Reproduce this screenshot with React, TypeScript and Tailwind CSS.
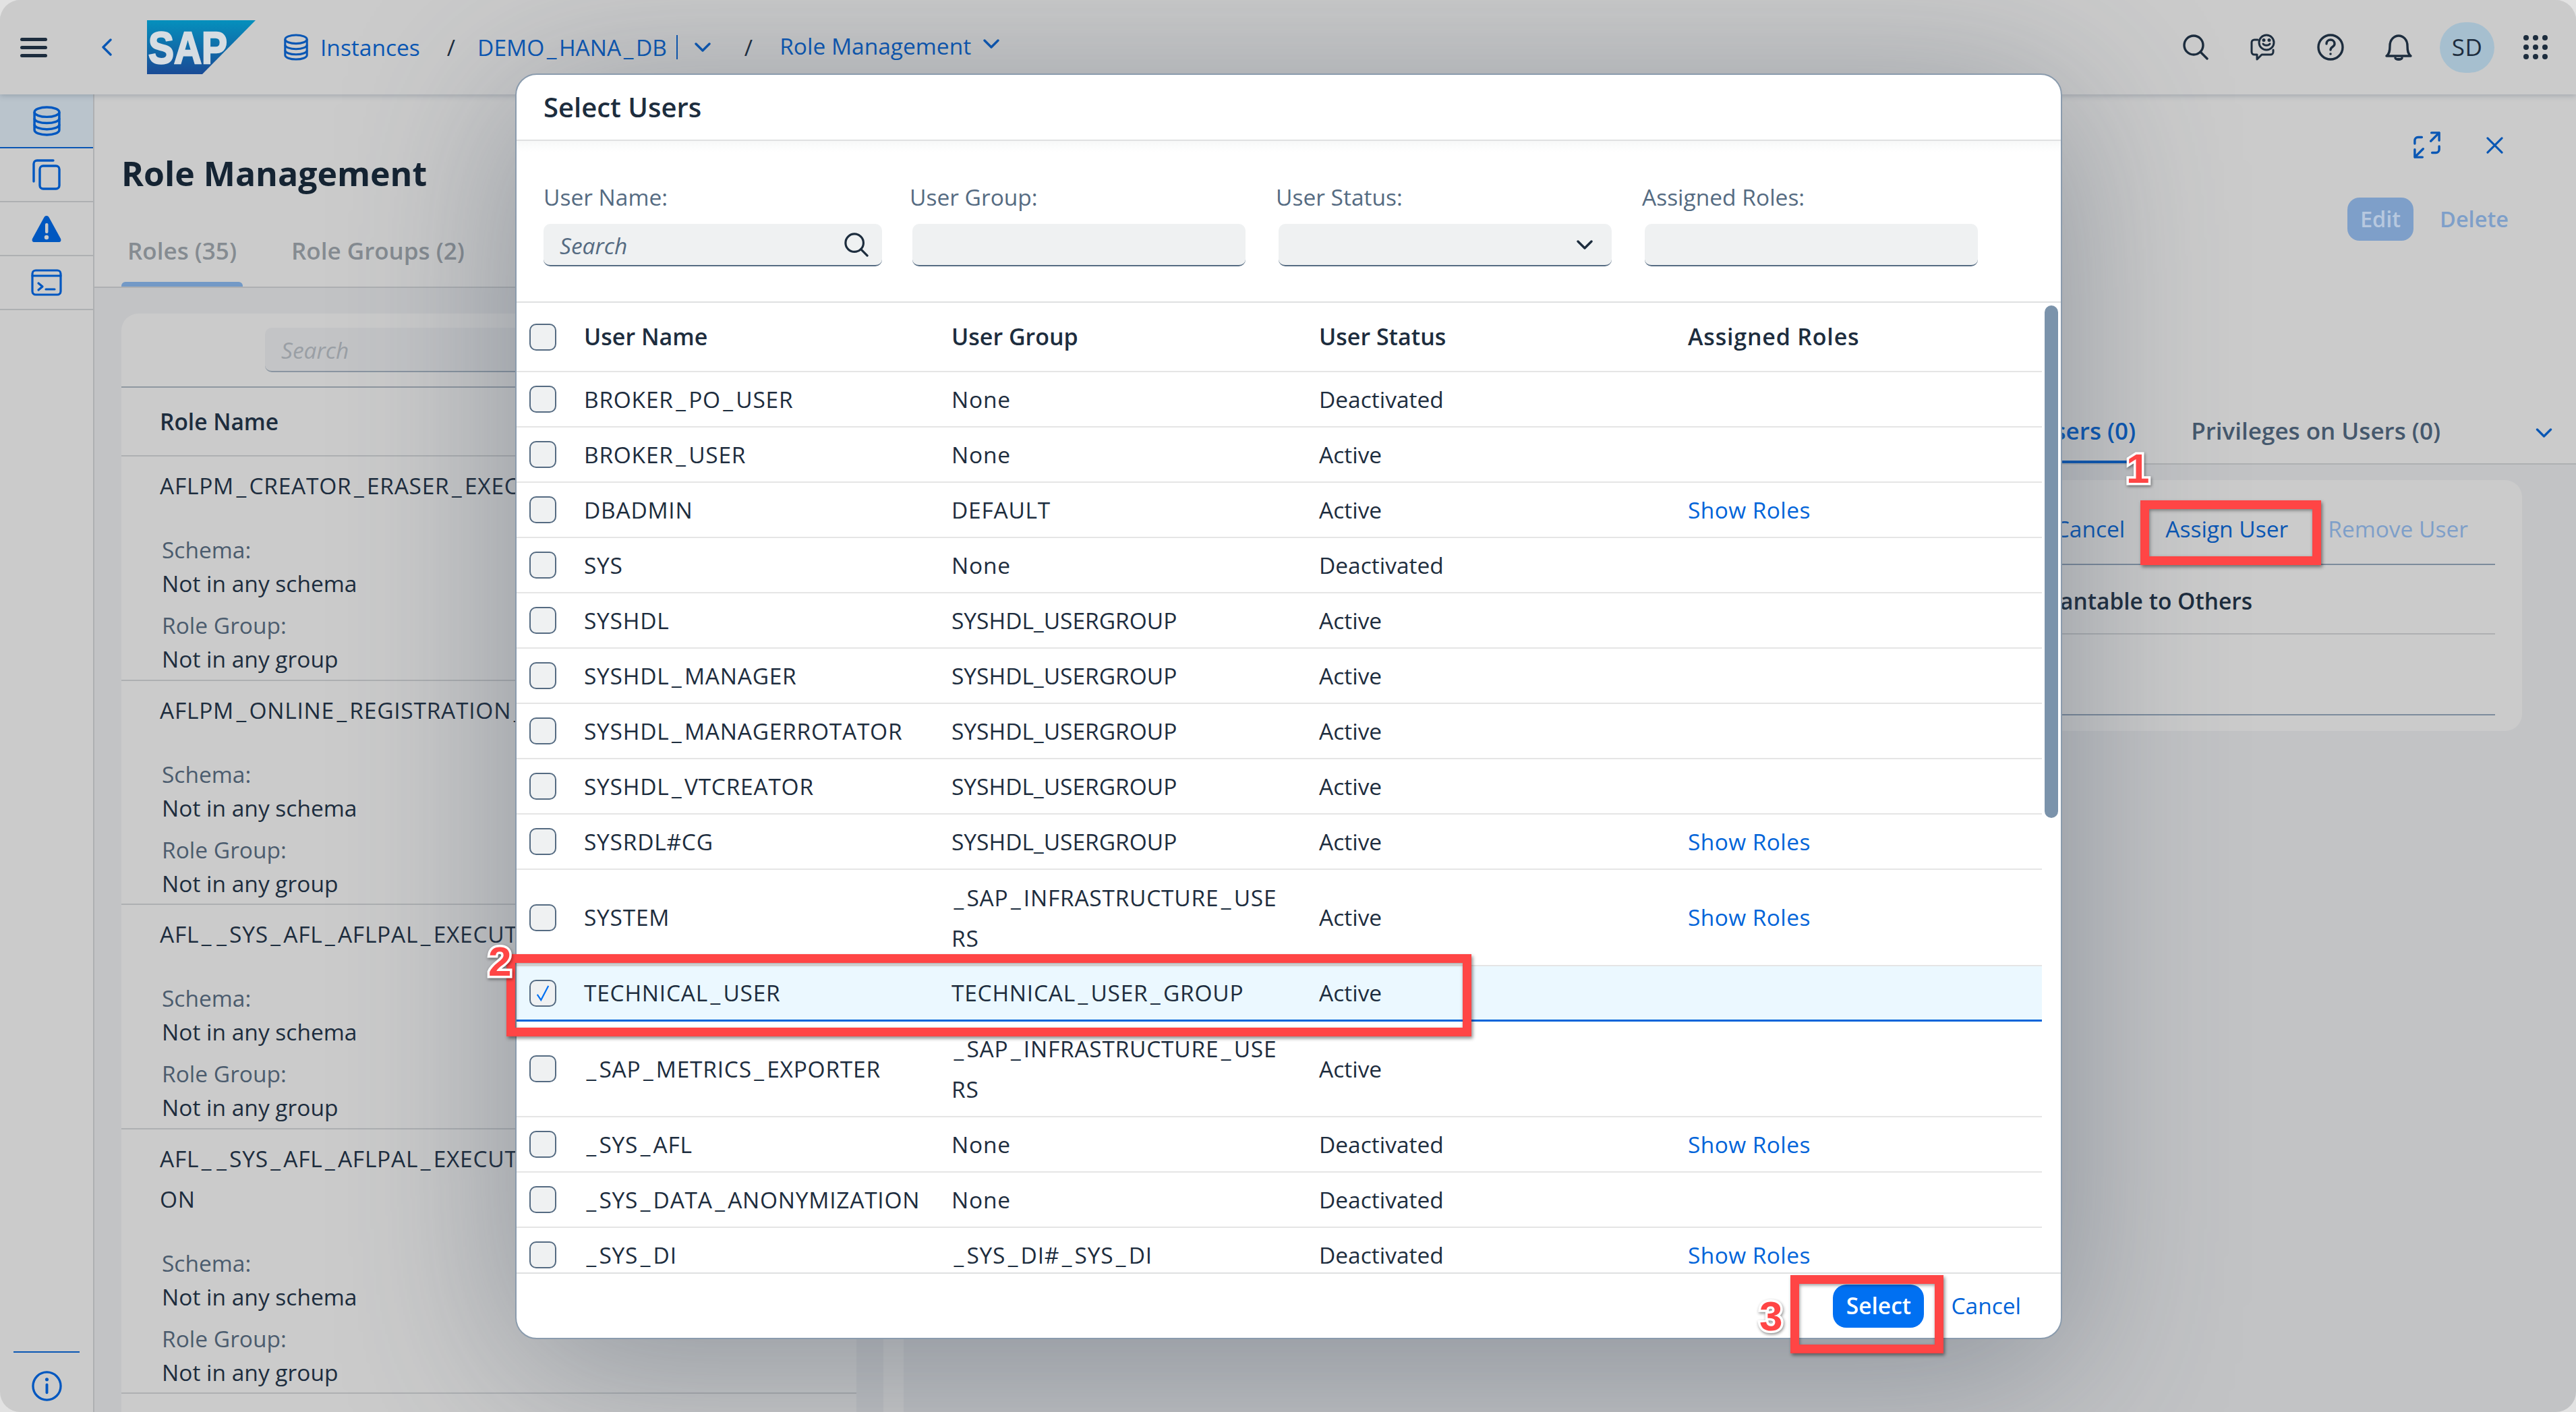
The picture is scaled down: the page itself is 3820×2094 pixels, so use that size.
import React from "react";

const blue = "#0a57b4";

const users = [
  { name: "BROKER_PO_USER", group: "None", status: "Deactivated", roles: false },
  { name: "BROKER_USER", group: "None", status: "Active", roles: false },
  { name: "DBADMIN", group: "DEFAULT", status: "Active", roles: true },
  { name: "SYS", group: "None", status: "Deactivated", roles: false },
  { name: "SYSHDL", group: "SYSHDL_USERGROUP", status: "Active", roles: false },
  { name: "SYSHDL_MANAGER", group: "SYSHDL_USERGROUP", status: "Active", roles: false },
  { name: "SYSHDL_MANAGERROTATOR", group: "SYSHDL_USERGROUP", status: "Active", roles: false },
  { name: "SYSHDL_VTCREATOR", group: "SYSHDL_USERGROUP", status: "Active", roles: false },
  { name: "SYSRDL#CG", group: "SYSHDL_USERGROUP", status: "Active", roles: true },
  { name: "SYSTEM", group: "_SAP_INFRASTRUCTURE_USE|RS", status: "Active", roles: true, tall: "h-[143px]" },
  { name: "TECHNICAL_USER", group: "TECHNICAL_USER_GROUP", status: "Active", roles: false, selected: true },
  { name: "_SAP_METRICS_EXPORTER", group: "_SAP_INFRASTRUCTURE_USE|RS", status: "Active", roles: false, tall: "h-[142px]" },
  { name: "_SYS_AFL", group: "None", status: "Deactivated", roles: true },
  { name: "_SYS_DATA_ANONYMIZATION", group: "None", status: "Deactivated", roles: false },
  { name: "_SYS_DI", group: "_SYS_DI#_SYS_DI", status: "Deactivated", roles: true },
];

// only the part of each title that shows beside the dialog
const roles = [
  { title: ["AFLPM_CREATOR_ERASER_EXECUTE"] },
  { title: ["AFLPM_ONLINE_REGISTRATION_EXE"] },
  { title: ["AFL__SYS_AFL_AFLPAL_EXECUTE"] },
  { title: ["AFL__SYS_AFL_AFLPAL_EXECUTE", "ON"] },
];

// the reference font has a much wider underscore than Open Sans
const Ident = ({ text, tight }: { text: string; tight?: boolean }) => (
  <span className={tight ? "" : "tracking-[0.75px]"}>
    {text.split(/(_)/).map((part, i) =>
      part === "_" ? (
        <span key={i} className="px-[3.5px]">
          _
        </span>
      ) : (
        part
      )
    )}
  </span>
);

const DbIcon = ({ className }: { className: string }) => (
  <svg viewBox="0 0 40 44" className={className} fill="none" stroke="currentColor" strokeWidth="3.4">
    <ellipse cx="20" cy="9" rx="18" ry="7" />
    <path d="M2 9v26c0 4 8 7 18 7s18-3 18-7V9" />
    <path d="M2 18c0 4 8 7 18 7s18-3 18-7" />
    <path d="M2 27c0 4 8 7 18 7s18-3 18-7" />
  </svg>
);

const Chevron = ({ className }: { className: string }) => (
  <svg viewBox="0 0 24 14" className={className} fill="none" stroke="currentColor" strokeWidth="3.4" strokeLinecap="round" strokeLinejoin="round">
    <path d="M2 2l10 10L22 2" />
  </svg>
);

const SearchIcon = ({ className }: { className: string }) => (
  <svg viewBox="0 0 38 38" className={className} fill="none" stroke="currentColor" strokeWidth="3.4" strokeLinecap="round">
    <circle cx="16" cy="16" r="14" />
    <path d="M26 26l10 10" />
  </svg>
);

const SapLogo = () => (
  <svg viewBox="0 0 161 80" className="w-[161px] h-[80px]">
    <defs>
      <linearGradient id="sapfill" x1="0" y1="0" x2="0" y2="1">
        <stop offset="0" stopColor="#0590bd" />
        <stop offset="1" stopColor="#1a4b96" />
      </linearGradient>
    </defs>
    <path d="M0 0H161L82 80H0Z" fill="url(#sapfill)" />
    <text
      x="2"
      y="64"
      textLength="117"
      lengthAdjust="spacingAndGlyphs"
      fill="#d6dde2"
      stroke="#d6dde2"
      strokeWidth="2.5"
      fontFamily="'Liberation Sans',sans-serif"
      fontWeight="700"
      fontSize="66"
    >
      SAP
    </text>
  </svg>
);

const Checkbox = ({ checked }: { checked?: boolean }) => (
  <div className="w-[40px] h-[40px] rounded-[10px] border-2 border-[#556b82] bg-[#eff1f2] flex items-center justify-center">
    {checked && (
      <svg viewBox="0 0 24 30" className="w-[22px] h-[28px]" fill="none" stroke="#0070f2" strokeWidth="2.4">
        <path d="M3 17l6 9L21 3" />
      </svg>
    )}
  </div>
);

const RedBox = ({ className }: { className: string }) => (
  <div className={`absolute border-[13px] border-[#ff4545] shadow-[2px_3px_5px_rgba(0,0,0,0.45),inset_1px_2px_5px_rgba(0,0,0,0.4)] ${className}`} />
);

const Digit = ({ n, className }: { n: string; className: string }) => (
  <div
    className={`absolute font-['Liberation_Sans',sans-serif] font-bold text-[62px] leading-none text-[#ff4545] [-webkit-text-stroke:7px_white] [paint-order:stroke_fill] drop-shadow-[1px_2px_2px_rgba(0,0,0,0.45)] ${className}`}
  >
    {n}
  </div>
);

const Sidebar = () => (
  <div className="w-[140px] shrink-0 border-r-2 border-[#aeb0b2] bg-[#cbcbcb] flex flex-col text-[#0057c0]">
    <div className="h-[80px] bg-[#bac4cc] border-b-2 border-[#0a57b4] flex items-center justify-center">
      <DbIcon className="w-[41px] h-[45px]" />
    </div>
    <div className="h-[80px] border-b-2 border-[#aeb0b2] flex items-center justify-center">
      <svg viewBox="0 0 42 46" className="w-[42px] h-[46px]" fill="none" stroke="currentColor" strokeWidth="3.4" strokeLinecap="round">
        <rect x="11" y="10" width="29" height="34" rx="5" />
        <path d="M2 33V7c0-3 2-5 5-5h24" />
      </svg>
    </div>
    <div className="h-[80px] border-b-2 border-[#aeb0b2] flex items-center justify-center">
      <svg viewBox="0 0 46 42" className="w-[46px] h-[42px]">
        <path d="M23 2c2 0 3 1 4 3l17 31c1 3 0 5-3 5H5c-3 0-4-2-3-5L19 5c1-2 2-3 4-3z" fill="currentColor" />
        <rect x="21" y="13" width="4.5" height="15" rx="2" fill="#cbcbcb" />
        <circle cx="23" cy="34" r="3.2" fill="#cbcbcb" />
      </svg>
    </div>
    <div className="h-[80px] border-b-2 border-[#aeb0b2] flex items-center justify-center">
      <svg viewBox="0 0 46 40" className="w-[46px] h-[40px]" fill="none" stroke="currentColor" strokeWidth="3.2" strokeLinecap="round" strokeLinejoin="round">
        <rect x="2" y="2" width="42" height="36" rx="5" />
        <path d="M2 10h42" />
        <path d="M11 21l6 5-6 5" />
        <path d="M22 30h13" />
      </svg>
    </div>
    <div className="mt-auto mx-[20px] border-t-2 border-[#0a57b4]" />
    <div className="h-[88px] pt-[10px] flex items-center justify-center">
      <svg viewBox="0 0 46 46" className="w-[45px] h-[45px]" fill="none" stroke="currentColor" strokeWidth="3.4" strokeLinecap="round">
        <circle cx="23" cy="23" r="21" />
        <path d="M23 21v12" strokeWidth="4" />
        <circle cx="23" cy="13" r="2.6" fill="currentColor" stroke="none" />
      </svg>
    </div>
  </div>
);

const Header = () => (
  <div className="relative z-10 h-[140px] shrink-0 bg-[#cbcbcb] shadow-[0_2px_8px_rgba(70,85,105,0.3)] flex items-center pl-[30px] pr-[42px] text-[33.5px]" style={{ color: blue }}>
    <div className="w-[40px] flex flex-col gap-[7px]">
      <div className="h-[5px] rounded bg-[#1d2d3e]" />
      <div className="h-[5px] rounded bg-[#1d2d3e]" />
      <div className="h-[5px] rounded bg-[#1d2d3e]" />
    </div>
    <svg viewBox="0 0 16 26" className="ml-[80px] w-[16px] h-[26px]" fill="none" stroke="currentColor" strokeWidth="3.4" strokeLinecap="round" strokeLinejoin="round">
      <path d="M14 2L3 13l11 11" />
    </svg>
    <div className="ml-[52px]">
      <SapLogo />
    </div>
    <DbIcon className="ml-[42px] w-[36px] h-[40px]" />
    <span className="ml-[18px]">Instances</span>
    <span className="ml-[40px] text-[#1d2d3e]">/</span>
    <span className="ml-[33px]">
      <Ident text="DEMO_HANA_DB" tight />
    </span>
    <div className="ml-[14px] w-[2px] h-[36px] bg-[#0a57b4]" />
    <Chevron className="ml-[25px] w-[24px] h-[14px]" />
    <span className="ml-[50px] text-[#1d2d3e]">/</span>
    <span className="ml-[40px] mb-[4px]">Role Management</span>
    <Chevron className="ml-[18px] mb-[10px] w-[24px] h-[14px]" />

    <div className="ml-auto flex items-center text-[#1d2d3e]">
      <SearchIcon className="w-[38px] h-[38px]" />
      <svg viewBox="0 0 38 40" className="ml-[62px] w-[38px] h-[40px]" fill="none" stroke="currentColor" strokeWidth="3" strokeLinecap="round" strokeLinejoin="round">
        <path d="M11 9H6a4 4 0 0 0-4 4v14a4 4 0 0 0 4 4h4v7l7-7h13a4 4 0 0 0 4-4v-3" />
        <circle cx="24" cy="13" r="11" />
        <path d="M19 15c2 3 8 3 10 0" />
        <circle cx="20" cy="9.5" r="1" fill="currentColor" />
        <circle cx="28" cy="9.5" r="1" fill="currentColor" />
      </svg>
      <svg viewBox="0 0 40 40" className="ml-[61px] w-[40px] h-[40px]" fill="none" stroke="currentColor" strokeWidth="3.4" strokeLinecap="round">
        <circle cx="20" cy="20" r="18" />
        <path d="M14 15c0-8 12-8 12 0 0 5-6 4-6 9" />
        <circle cx="20" cy="30" r="1.8" fill="currentColor" stroke="none" />
      </svg>
      <svg viewBox="0 0 40 40" className="ml-[61px] w-[40px] h-[40px]" fill="none" stroke="currentColor" strokeWidth="3.4" strokeLinecap="round" strokeLinejoin="round">
        <path d="M2 33h36c-4-3-5-7-5-15C33 9 27 3 20 3S7 9 7 18c0 8-1 12-5 15z" />
        <path d="M15 36c1 3 9 3 10 0" fill="currentColor" />
      </svg>
      <div className="ml-[41px] w-[81px] h-[75px] rounded-full bg-[#a6bfcf] flex items-center justify-center font-medium text-[35px] [letter-spacing:0.5px]">
        SD
      </div>
      <div className="ml-[43px] grid grid-cols-3 gap-x-[6px] gap-y-[6px]">
        {Array.from({ length: 9 }).map((_, i) => (
          <div key={i} className="w-[8px] h-[8px] rounded-full bg-[#1d2d3e]" />
        ))}
      </div>
    </div>
  </div>
);

const LeftPane = () => (
  <div className="w-[1170px] shrink-0 bg-[#c2c3c5] flex flex-col overflow-hidden">
    <div className="bg-[#cbcbcb] border-b-2 border-[#aeb0b2] pl-[40px] pt-[87px] h-[287px] shrink-0">
      <div className="text-[50px] leading-[60px] font-bold text-[#152433]">Role Management</div>
      <div className="mt-[55px] h-[83px] flex items-stretch font-semibold text-[35px] text-[#858b91]">
        <div className="w-[180px] flex flex-col items-center">
          <span className="mt-[8px] leading-[44px]">Roles (35)</span>
          <div className="mt-auto w-full h-[7px] rounded-t-md bg-[#7399c6]" />
        </div>
        <span className="ml-[72px] mt-[8px] leading-[44px]">Role Groups (2)</span>
      </div>
    </div>
    <div className="ml-[40px] mt-[38px] w-[1090px] flex-1 rounded-t-[25px] bg-[#cbcbcb] text-[33.5px]">
      <div className="h-[110px] border-b-2 border-[#8f97a0] pl-[213px] pt-[21px]">
        <div className="w-[860px] h-[66px] bg-[#c3c4c6] border-b-2 border-[#8a95a1] rounded-[10px] pl-[24px] pt-[3px] flex items-center italic text-[#9a9fa5]">
          Search
        </div>
      </div>
      <div className="h-[102px] border-b-2 border-[#aeb0b2] pl-[57px] flex items-center font-semibold text-[#1d2d3e]">
        Role Name
      </div>
      {roles.map((r, i) => (
        <div key={i} className="border-b-2 border-[#aeb0b2] pt-[13px] pb-[5.5px] pl-[57px] text-[#1d2d3e] overflow-hidden">
          <div className="leading-[60px] whitespace-nowrap">
            {r.title.map((t) => (
              <div key={t}>
                <Ident text={t} />
              </div>
            ))}
          </div>
          <div className="mt-[40px] ml-[3px] leading-[50px] text-[#4b5c6e]">Schema:</div>
          <div className="ml-[3px] leading-[50px]">Not in any schema</div>
          <div className="mt-[12px] ml-[3px] leading-[50px] text-[#4b5c6e]">Role Group:</div>
          <div className="ml-[3px] leading-[50px]">Not in any group</div>
        </div>
      ))}
    </div>
  </div>
);

const RightPane = () => (
  <div className="flex-1 bg-[#c2c3c5] flex flex-col text-[33.5px]">
    <div className="h-[549px] shrink-0 bg-[#cbcbcb] border-b-2 border-[#aeb0b2] flex flex-col pr-[100px]">
      <div className="mt-[55px] mr-[8px] flex items-center justify-end gap-[68px]" style={{ color: blue }}>
        <svg viewBox="0 0 42 42" className="w-[40px] h-[40px]" fill="none" stroke="currentColor" strokeWidth="3.6" strokeLinecap="round" strokeLinejoin="round">
          <path d="M28 2h12v12M40 2L27 15M14 40H2V28M2 40l13-13M2 19v-5a5 5 0 0 1 5-5h6M40 23v5a5 5 0 0 1-5 5h-6" />
        </svg>
        <svg viewBox="0 0 26 26" className="w-[25px] h-[25px]" fill="none" stroke="currentColor" strokeWidth="3.2" strokeLinecap="round">
          <path d="M2 2l22 22M24 2L2 24" />
        </svg>
      </div>
      <div className="mt-[58px] flex items-center justify-end font-semibold text-[32.5px]">
        <div className="w-[98px] h-[64px] rounded-[18px] bg-[#7e9fc9] text-[#b7c8df] flex items-center justify-center">Edit</div>
        <span className="ml-[39px] text-[#7e9fc9]">Delete</span>
      </div>
      <div className="mt-auto -mr-[65px] flex items-end justify-end font-semibold text-[35px]">
        <div className="pl-[40px] pr-[12px] h-[70px] border-b-4 border-[#0a57b4] leading-[44px]" style={{ color: blue }}>
          Users (0)
        </div>
        <div className="ml-[70px] h-[70px] leading-[44px] text-[#45586d]">Privileges on Users (0)</div>
        <Chevron className="ml-[141px] mb-[38px] w-[25px] h-[14px] text-[#0a57b4]" />
      </div>
    </div>
    <div className="mt-[23px] mr-[80px] h-[372px] rounded-[25px] bg-[#cbcbcb] px-[40px]">
      <div className="h-[126px] border-b-2 border-[#7c8b9c] flex items-center justify-end pt-[20px] pr-[40px] font-medium">
        <span style={{ color: blue }}>Cancel</span>
        <span className="ml-[60px]" style={{ color: blue }}>Assign User</span>
        <span className="ml-[59px] text-[#7e9fc9]">Remove User</span>
      </div>
      <div className="h-[103px] border-b-2 border-[#aeb0b2] flex items-center justify-end pt-[5px] pr-[360px] font-semibold text-[#1d2d3e]">
        Grantable to Others
      </div>
      <div className="h-[120px] border-b-2 border-[#7c8b9c]" />
    </div>
  </div>
);

const UserRow = ({ u }: { u: (typeof users)[number] }) => (
  <div
    className={`grid grid-cols-[100px_545px_545px_545px_1fr] items-center ${u.tall ?? "h-[82px]"} ${
      u.selected ? "bg-[#ebf8ff] border-b-[3px] border-[#0064d9]" : "border-b-2 border-[#e5e5e5]"
    }`}
  >
    <div className="pl-[19px]">
      <Checkbox checked={u.selected} />
    </div>
    <div>
      <Ident text={u.name} />
    </div>
    <div className={u.tall ? "leading-[60px]" : ""}>
      {u.group.split("|").map((line) => (
        <div key={line}>{line === "SYSHDL_USERGROUP" ? line : <Ident text={line} />}</div>
      ))}
    </div>
    <div>{u.status}</div>
    {u.roles ? <div className="pl-[2px] tracking-[0.4px] text-[#0064d9]">Show Roles</div> : <div />}
  </div>
);

const FilterField = ({ label, children, first }: { label: string; children?: React.ReactNode; first?: boolean }) => (
  <div className="w-[543px]">
    <div className="h-[40px] leading-[40px] text-[#556b82]">{label}</div>
    <div
      className={`mt-[20px] h-[63px] rounded-[10px] bg-[#eff1f2] border-b-2 border-[#556b82] flex items-center ${
        first ? "w-[502px]" : "ml-[4px] w-[494px]"
      }`}
    >
      {children}
    </div>
  </div>
);

const SelectUsersDialog = () => (
  <div className="absolute z-20 left-[764px] top-[109px] w-[2294px] h-[1877px] rounded-[32px] border-2 border-[#8a9bad] bg-white flex flex-col overflow-hidden shadow-[0_40px_320px_rgba(50,65,85,0.4)] text-[33.5px] text-[#1d2d3e]">
    <div className="h-[98px] shrink-0 border-b-2 border-[#dfe0e1] pl-[40px] flex items-center text-[40px] font-semibold">
      Select Users
    </div>
    <div className="h-[238px] shrink-0 pl-[40px] pt-[63px] flex bg-gradient-to-b from-[#f7f8f8] to-white to-[16px]">
      <FilterField label="User Name:" first>
        <span className="pl-[24px] pt-[3px] italic text-[#556b82]">Search</span>
        <SearchIcon className="ml-auto mr-[20px] w-[36px] h-[36px]" />
      </FilterField>
      <FilterField label="User Group:" />
      <FilterField label="User Status:">
        <Chevron className="ml-auto mr-[28px] w-[24px] h-[14px]" />
      </FilterField>
      <FilterField label="Assigned Roles:" />
    </div>
    <div className="relative flex-1 min-h-0 border-t-2 border-[#dfe0e1] overflow-hidden">
      <div className="w-[2262px]">
        <div className="grid grid-cols-[100px_545px_545px_545px_1fr] items-center h-[103px] border-b-2 border-[#e5e5e5] font-semibold text-[34px]">
          <div className="pl-[19px]">
            <Checkbox />
          </div>
          <div>User Name</div>
          <div>User Group</div>
          <div>User Status</div>
          <div className="pl-[2px] tracking-[0.8px]">Assigned Roles</div>
        </div>
        {users.map((u) => (
          <UserRow key={u.name} u={u} />
        ))}
      </div>
      <div className="absolute right-[4px] top-[4px] w-[20px] h-[760px] rounded-full bg-[#7b93ab]" />
    </div>
    <div className="h-[97px] shrink-0 border-t-2 border-[#dfe0e1] flex items-center justify-end pr-[59px]">
      <div className="w-[135px] h-[64px] rounded-[20px] bg-[#0070f2] text-white font-semibold flex items-center justify-center">Select</div>
      <span className="ml-[40px] font-medium text-[#0064d9]">Cancel</span>
    </div>
  </div>
);

export default function App() {
  return (
    <div className="relative w-[3820px] h-[2094px] overflow-hidden bg-[#e2e2e2] font-['Open_Sans',sans-serif]">
      <div className="w-full h-full rounded-[30px] overflow-hidden flex flex-col">
        <Header />
        <div className="flex-1 min-h-0 flex">
          <Sidebar />
          <LeftPane />
          <div className="w-[30px] shrink-0 bg-[#cbcbcb]" />
          <RightPane />
        </div>
      </div>
      <SelectUsersDialog />
      <RedBox className="z-30 left-[3174px] top-[742px] w-[268px] h-[96px]" />
      <RedBox className="z-30 left-[751px] top-[1415px] w-[1431px] h-[122px]" />
      <RedBox className="z-30 left-[2655px] top-[1891px] w-[227px] h-[116px]" />
      <Digit n="1" className="z-30 left-[3153px] top-[664px]" />
      <Digit n="2" className="z-30 left-[724px] top-[1395px]" />
      <Digit n="3" className="z-30 left-[2609px] top-[1921px]" />
    </div>
  );
}
